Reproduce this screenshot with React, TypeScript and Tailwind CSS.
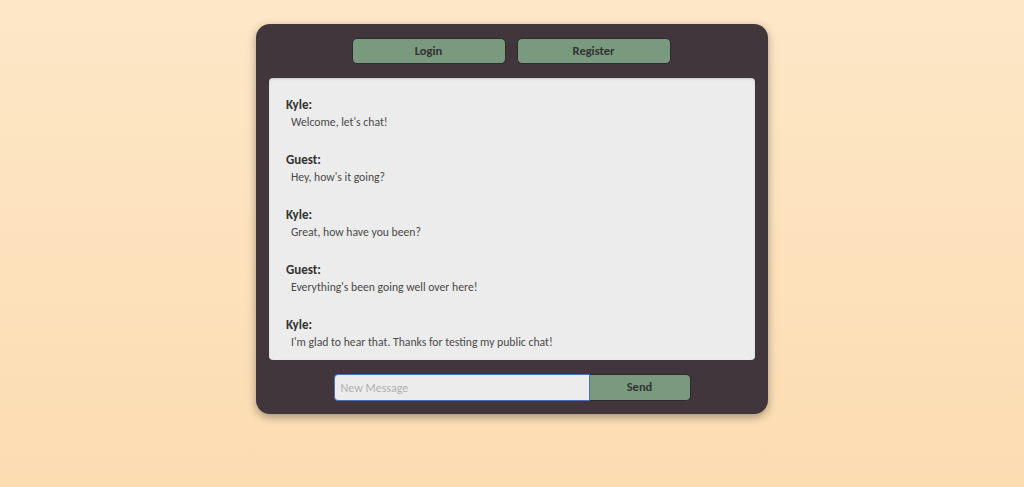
import { useState } from 'react';

const messages = [
    { user: 'Kyle', text: "Welcome, let's chat!" },
    { user: 'Guest', text: "Hey, how's it going?" },
    { user: 'Kyle', text: 'Great, how have you been?' },
    { user: 'Guest', text: "Everything's been going well over here!" },
    { user: 'Kyle', text: "I'm glad to hear that. Thanks for testing my public chat!" },
];

const App = () => {
    const [message, setMessage] = useState('');

    return (
        <div
            className="min-h-[487px] w-full flex justify-center bg-gradient-to-b from-[#fde7c7] to-[#fcdcb1] pt-[24px]"
            style={{ fontFamily: 'Calibri, Lato, "Open Sans", sans-serif' }}
        >
            <div className="w-[512px] h-[390px] bg-[#40363c] rounded-[14px] shadow-[0_3px_8px_rgba(0,0,0,0.35)] flex flex-col px-[13px] pt-[14px]">
                <div className="flex justify-center gap-[11px] pr-[2px]">
                    <button
                        type="button"
                        className="w-[154px] h-[26px] rounded-[5px] bg-[#799a7e] border border-[#2f2a2c] text-[12.5px] font-semibold text-[#333]"
                    >
                        Login
                    </button>
                    <button
                        type="button"
                        className="w-[154px] h-[26px] rounded-[5px] bg-[#799a7e] border border-[#2f2a2c] text-[12.5px] font-semibold text-[#333]"
                    >
                        Register
                    </button>
                </div>
                <div className="mt-[14px] h-[282px] bg-[#ececec] rounded-[4px] shadow-[inset_0_1px_2px_rgba(0,0,0,0.15)] px-[17px] pt-[19px] flex flex-col gap-[21px] text-[#333]">
                    {messages.map((item, index) => (
                        <div key={index} className="flex flex-col">
                            <span className="text-[13px] font-semibold leading-[16px] text-[#333]">{item.user}:</span>
                            <span className="text-[11.7px] leading-[18px] pl-[5px] text-[#4a4a4a]">{item.text}</span>
                        </div>
                    ))}
                </div>
                <div className="mt-[14px] flex justify-center">
                    <input
                        value={message}
                        onChange={(e) => setMessage(e.target.value)}
                        placeholder="New Message"
                        className="w-[256px] h-[27px] bg-[#ececec] border border-[#4d6fb0] rounded-l-[4px] px-[6px] text-[12px] outline-none placeholder:text-[#b0b0b0]"
                    />
                    <button
                        type="button"
                        className="w-[101px] h-[27px] bg-[#799a7e] border border-[#2f2a2c] border-l-0 rounded-r-[5px] text-[12.5px] font-semibold text-[#333]"
                    >
                        Send
                    </button>
                </div>
            </div>
        </div>
    );
};

export default App;
